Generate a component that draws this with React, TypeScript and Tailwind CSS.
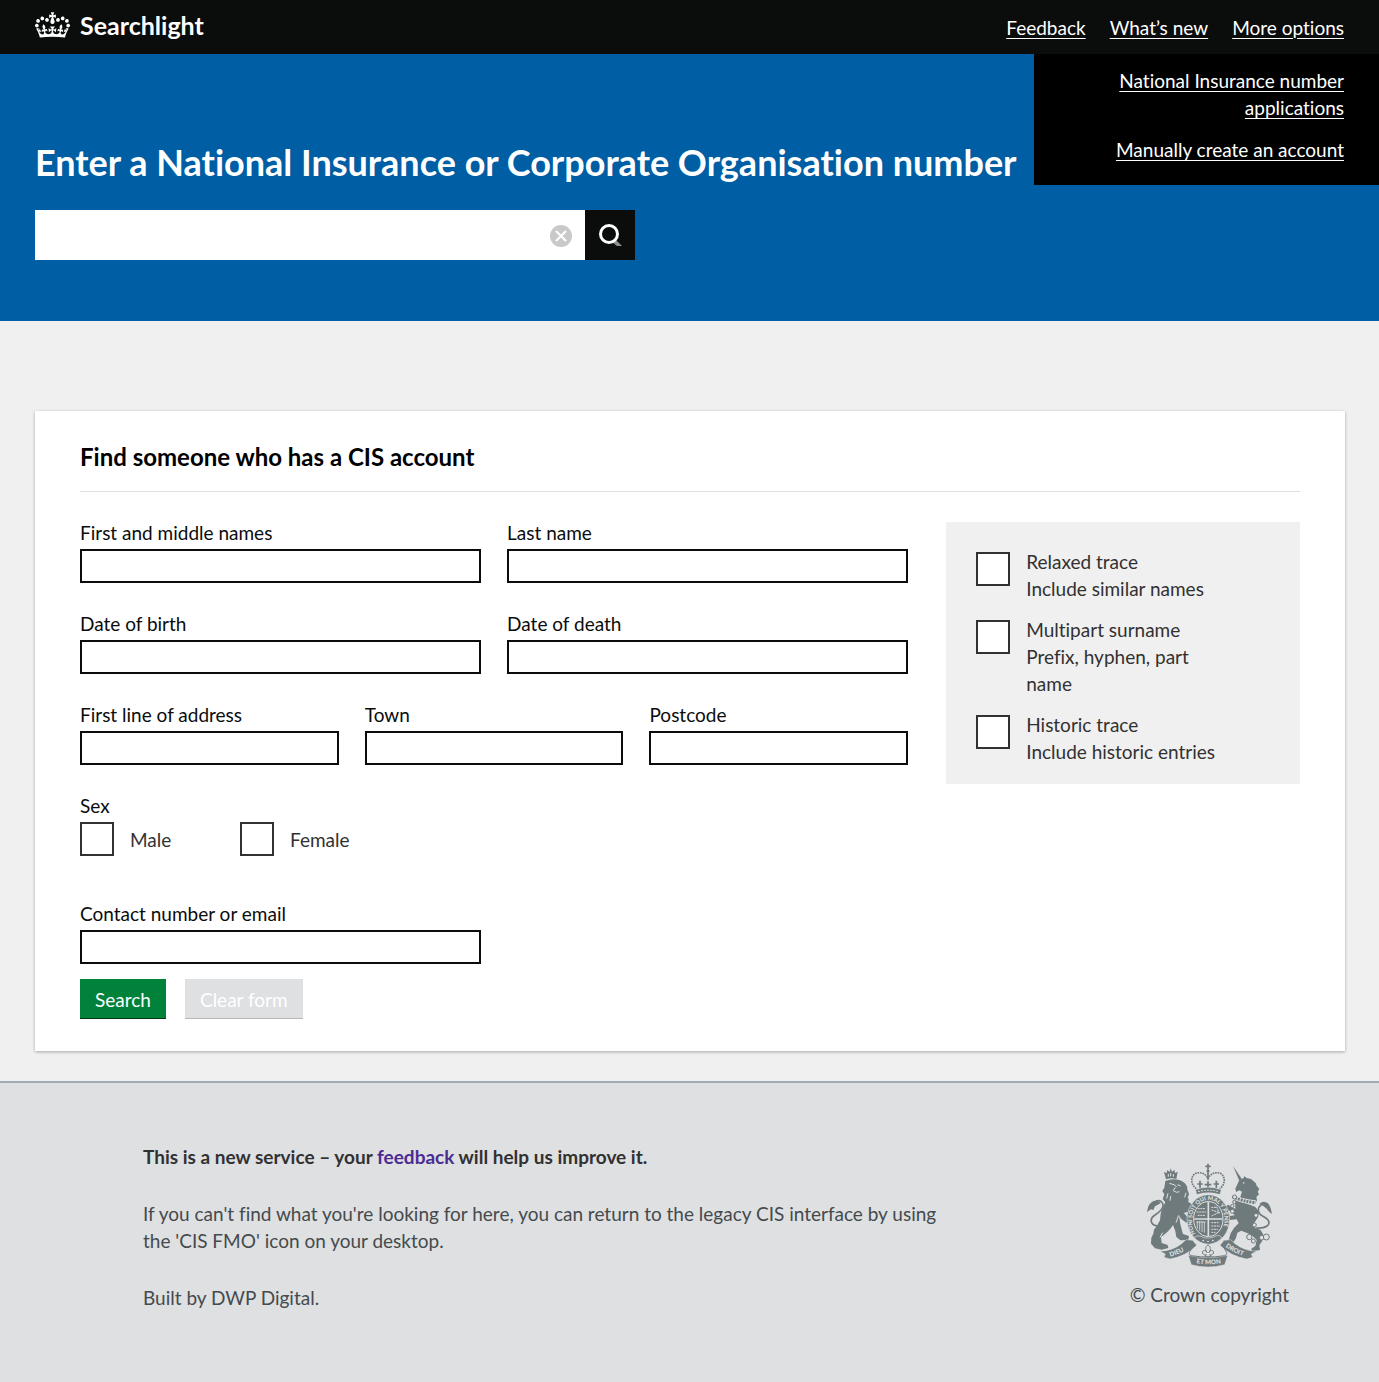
import { useState } from "react";

function Crown() {
  return (
    <svg viewBox="0 0 132 97" className="h-[26px] w-[35px]" fill="currentColor" aria-hidden="true">
      <path
        fillRule="evenodd"
        d="M25 30.2c3.5 1.5 7.7-.2 9.1-3.7 1.5-3.6-.2-7.8-3.9-9.2-3.6-1.4-7.6.3-9.1 3.9-1.4 3.5.3 7.5 3.9 9zM9 39.5c3.6 1.5 7.8-.2 9.2-3.7 1.5-3.6-.2-7.8-3.9-9.1-3.6-1.5-7.6.2-9.1 3.8-1.4 3.5.3 7.5 3.8 9zM4.4 57.2c3.5 1.5 7.7-.2 9.1-3.8 1.5-3.6-.2-7.7-3.9-9.1-3.5-1.5-7.6.3-9.1 3.8-1.4 3.5.3 7.6 3.9 9.1zm38.3-21.4c3.5 1.5 7.7-.2 9.1-3.8 1.5-3.6-.2-7.7-3.9-9.1-3.6-1.5-7.6.3-9.1 3.8-1.3 3.6.4 7.7 3.9 9.1zm64.4-5.6c-3.6 1.5-7.8-.2-9.1-3.7-1.5-3.6.2-7.8 3.8-9.2 3.6-1.4 7.7.3 9.2 3.9 1.3 3.5-.4 7.5-3.9 9zm15.9 9.3c-3.6 1.5-7.7-.2-9.1-3.7-1.5-3.6.2-7.8 3.7-9.1 3.6-1.5 7.7.2 9.2 3.8 1.5 3.5-.3 7.5-3.8 9zm4.7 17.7c-3.6 1.5-7.8-.2-9.2-3.8-1.5-3.6.2-7.7 3.9-9.1 3.6-1.5 7.7.3 9.2 3.8 1.3 3.5-.4 7.6-3.9 9.1zM89.3 35.8c-3.6 1.5-7.8-.2-9.2-3.8-1.4-3.6.2-7.7 3.9-9.1 3.6-1.5 7.7.3 9.2 3.8 1.4 3.6-.3 7.7-3.9 9.1zM69.7 17.7l8.9 4.7V9.3l-8.9 2.8c-.2-.3-.5-.6-.9-.9L72.4 0H59.6l3.5 11.2c-.3.3-.6.5-.9.9l-8.8-2.8v13.1l8.8-4.7c.3.3.6.7.9.9l-5 15.4v.1c-.2.8-.4 1.6-.4 2.4 0 4.1 3.1 7.5 7 8.1h.2c.3 0 .7.1 1 .1.4 0 .7 0 1-.1h.2c4-.6 7.1-4.1 7.1-8.1 0-.8-.1-1.7-.4-2.4V34l-5.1-15.4c.4-.2.7-.6 1-.9zM66 92.8c16.9 0 32.8 1.1 47.1 3.2 4-16.9 8.9-26.7 14-33.5l-9.6-3.4c1 4.9 1.1 7.2 0 10.2-1.5-1.4-3-4.3-4.2-8.7L108.6 76c2.8-2 5-3.2 7.5-3.3-4.4 9.4-10 11.9-13.6 11.2-4.3-.8-6.3-4.6-5.6-7.9 1-4.7 5.7-5.9 8-.5 4.3-8.7-3-11.4-7.6-8.8 7.1-7.2 7.9-13.5 2.1-21.1-8 6.1-8.1 12.3-4.5 20.8-4.7-5.4-12.1-2.5-9.5 6.2 3.4-5.2 7.9-2 7.2 3.1-.6 4.3-6.4 7.8-13.5 7.2-10.3-.9-10.9-8-11.2-13.8 2.5-.5 7.1 1.8 11 7.3L80.2 60c-4.1 4.4-8 5.3-12.3 5.4 1.4-4.4 8-11.6 8-11.6H55.5s6.4 7.2 7.9 11.6c-4.2-.1-8-1-12.3-5.4l1.4 16.4c3.9-5.5 8.5-7.7 10.9-7.3-.3 5.8-.9 12.8-11.1 13.8-7.2.6-12.9-2.9-13.5-7.2-.7-5 3.8-8.3 7.1-3.1 2.7-8.7-4.6-11.6-9.4-6.2 3.7-8.5 3.6-14.7-4.6-20.8-5.8 7.6-5 13.9 2.2 21.1-4.7-2.6-11.9.1-7.7 8.8 2.3-5.5 7.1-4.2 8.1.5.7 3.3-1.3 7.1-5.7 7.9-3.5.7-9-1.8-13.5-11.2 2.5.1 4.7 1.3 7.5 3.3l-4.7-15.4c-1.2 4.4-2.7 7.2-4.3 8.7-1.1-3-.9-5.3 0-10.2l-9.5 3.4c5 6.9 9.9 16.7 14 33.5 14.8-2.1 30.8-3.2 47.7-3.2z"
      />
    </svg>
  );
}

function RoyalArms() {
  const ink = "#6f7a7d";
  const paper = "#dee0e2";
  return (
    <svg viewBox="81 39 375 312" className="h-[104px] w-[125px]" role="img" aria-label="Royal coat of arms">
      {/* lion */}
      <g fill={ink}>
        <path d="M138 88l-6-22 8 3 2-9 7 6 3-11 4 11 7-7 2 10 8-4-4 22q-15-5-31 1z" />
        <path d="M136 93q20-8 42-3 18 6 24 22-2 6 2 12 6 10-1 18 6 6 2 14l10 6 4 8-14 16-14 2 12 14 10 4-2 8-12 4-16-12-6-10 4 26q4 18 8 30l18 6-2 12-24 1-12-10q-2-20-10-36-10 18-36 36l2 18 18 6 2 9-20 5-20-4-12-14 1-18 6-12 2-12 10-14 8-14 2-20 6-20 8-14-8-10 5-14-6-10 6-10z" />
      </g>
      <path d="M113 228c-22-2-24-20-12-30 12-8 26-16 28-30 1-12-10-20-20-14" fill="none" stroke={ink} strokeWidth="5" />
      <path d="M81 186q2-30 28-35l14 8-18 10-5 11-7-2z" fill={ink} />
      <g fill="none" stroke={paper} strokeWidth="3">
        <path d="M148 100l14 4 8 6M172 104l10 4M166 112l-6 10 10 5 8-2M144 130l-4 16M152 138l-2 14M198 128l-4 14" />
        <path d="M145 72v8M152 69v10M160 72v8" />
        <path d="M176 196l-8 22M120 262l8-14" />
      </g>

      {/* unicorn */}
      <path d="M339 48l27 40-8 4z" fill={ink} />
      <g fill={ink}>
        <path d="M346 116l12-26 12-5 4-7 5 6 14 3 14 12 3 8 8 10-5 8 4 8-8 8 2 10-6 10-45-18 6-18-8-4-10 5z" />
        <path d="M345 148l60 22 12 14-3 18-12 18 4 14 16 6 8 14-4 20-8 12 2 14-24 4-2-8 12-8 4-18-16-16-30-12-12 6-4 16-10 16-24 8-4-8 16-10 6-20 10-16 14-14-6-12-20 2-12-10-2-12 8 2 6 8 14-2-10-12-14-4-2-12 8-4 8 8 12 4z" />
      </g>
      <path d="M337 140q30 14 70 18" fill="none" stroke={paper} strokeWidth="14" />
      <path d="M337 140q30 14 70 18" fill="none" stroke={ink} strokeWidth="9" strokeDasharray="6 3" />
      <circle cx="371" cy="99" r="2.500" fill={paper} />
      <g fill={paper} stroke={ink} strokeWidth="3">
        <circle cx="344" cy="141" r="6" />
        <circle cx="343" cy="156" r="5" />
        <circle cx="337" cy="168" r="5" />
        <circle cx="337" cy="184" r="6" />
        <circle cx="408" cy="196" r="6" />
        <circle cx="403" cy="225" r="6" />
        <circle cx="388" cy="261" r="8" />
        <circle cx="400" cy="273" r="6" />
        <circle cx="425" cy="263" r="7" />
        <circle cx="439" cy="261" r="9" />
      </g>
      <path d="M408 234c30 2 46-10 36-24-10-12-28-12-29-28 0-16 14-24 24-18 6 4 8 8 10 16" fill="none" stroke={ink} strokeWidth="5" />
      <path d="M418 162q12-12 26-2 8 8 12 32l-8-6-8-10-10-8z" fill={ink} />

      {/* central crown */}
      <g fill="none" stroke={ink}>
        <path d="M228 120q36-14 74 0l-3 12q-34-10-68 0z" fill={ink} />
        <path d="M229 116c-18-12-18-38-2-46 14-5 30 0 37 16 7-16 23-21 37-16 16 8 16 34-2 46" strokeDasharray="5 2.500" strokeWidth="5" />
        <path d="M264 41v18M256 49h16M264 66v22" strokeWidth="5" />
        <circle cx="264" cy="63" r="4" fill={ink} />
        <path d="M240 92v22M232 102h16M289 92v22M281 102h16M264 94v18M254 104h20" strokeWidth="5" />
      </g>
      <path d="M234 125q30-9 62 0" fill="none" stroke={paper} strokeWidth="3" strokeDasharray="6 3" />

      {/* garter and quartered shield */}
      <ellipse cx="265" cy="208" rx="64" ry="74" fill={ink} stroke={paper} strokeWidth="2" />
      <ellipse cx="265" cy="207" rx="44" ry="53" fill={ink} stroke={paper} strokeWidth="3" />
      <g fill="none" stroke={paper}>
        <path d="M223 207h84M265 156v102" strokeWidth="5" />
        <path
          d="M233 176h24M230 186h28M233 196h24M274 172h16M275 180l24 8M275 198l24-12M290 170l8 22M274 218h24M274 228h26M274 238h20M274 247h12"
          strokeWidth="3"
          strokeDasharray="6 2"
        />
        <path d="M232 214v22M239 214v28M246 214v32M253 216v32M229 216h28" strokeWidth="2.500" />
      </g>
      <defs>
        <path id="garter" d="M226 252A50 60 0 0 1 217 207a48 57 0 0 1 96 0a50 60 0 0 1-14 45" />
        <path id="ribbon-left" d="M151 320Q188 310 216 287" />
        <path id="ribbon-middle" d="M229 339Q264 347 309 339" />
        <path id="ribbon-right" d="M316 290Q342 311 382 321" />
      </defs>
      <text fill={paper} fontFamily="Lato, sans-serif" fontWeight="900" fontSize="17">
        <textPath href="#garter">HONI SOIT QUI MAL Y PENSE</textPath>
      </text>
      <path d="M222 262q10-6 18-4 26 14 54-3l12 8q-12 16-40 20-28-2-44-21z" fill={ink} stroke={paper} strokeWidth="2" />
      <path d="M248 270l3 3M264 273v3M280 270l-3 3" stroke={paper} strokeWidth="5" />

      {/* motto ribbon */}
      <g fill={ink} stroke={paper} strokeWidth="1.500">
        <path d="M120 304l18-2q34-6 60-33l20 2 12 15q-30 32-80 41l-18-5 4-10z" />
        <path d="M410 304l-18-2q-34-6-60-33l-20 2-12 15q30 32 80 41l18-5-4-10z" />
        <path d="M205 316q60 14 118 0l-9 28q-50 14-100 0z" />
      </g>
      <path
        d="M208 288c10 0 8 8 2 16-6 10 0 12 12 14 24 4 60 4 84 0 12-2 18-4 12-14-6-8-8-16 4-16"
        fill="none"
        stroke={ink}
        strokeWidth="3"
      />
      <path
        d="M264 284c10 8 8 16 3 24 4-12 18-6 12 4-2 3-6 3-10 2l5 5h-8l-2 5-2-5h-8l5-5c-4 1-8 1-10-2-6-10 8-16 12-4-5-8-7-16 3-24z"
        fill={paper}
        stroke={ink}
        strokeWidth="3"
      />
      <g fill={paper} fontFamily="Lato, sans-serif" fontWeight="900" fontSize="19">
        <text>
          <textPath href="#ribbon-left">DIEU</textPath>
        </text>
        <text>
          <textPath href="#ribbon-middle">ET MON</textPath>
        </text>
        <text>
          <textPath href="#ribbon-right">DROIT</textPath>
        </text>
      </g>
    </svg>
  );
}

function Field({ id, label }: { id: string; label: string }) {
  return (
    <div className="min-w-0">
      <label htmlFor={id} className="mb-[5px] block leading-[22px]">
        {label}
      </label>
      <input id={id} name={id} type="text" className="block h-[34px] w-full rounded-none border-2 border-[#0b0c0c] bg-white px-1" />
    </div>
  );
}

const boxClass =
  "size-[34px] shrink-0 appearance-none rounded-none border-2 border-[#323132] bg-white checked:bg-[#323132]";

function TraceOption({ id, title, hint }: { id: string; title: string; hint: string }) {
  return (
    <div className="flex items-start gap-4">
      <input id={id} type="checkbox" className={`mt-1 ${boxClass}`} />
      <label htmlFor={id} className="max-w-[196px] leading-[27px]">
        <span className="block">{title}</span>
        <span className="block">{hint}</span>
      </label>
    </div>
  );
}

function SexOption({ id, label }: { id: string; label: string }) {
  return (
    <div className="flex w-40 items-center gap-4">
      <input id={id} type="checkbox" className={boxClass} />
      <label htmlFor={id} className="text-[#323132]">
        {label}
      </label>
    </div>
  );
}

const navLink = "underline decoration-1 underline-offset-3";

export default function App() {
  const [query, setQuery] = useState("");
  return (
    <div className="flex min-h-screen flex-col bg-[#f0f0f0] font-['Lato',sans-serif] text-[19px] leading-[27px] text-[#0b0c0c] [font-variant-ligatures:none]">
      <header className="relative flex h-[54px] items-center justify-between bg-[#0b0c0c] px-[35px] text-white">
        <a href="#home" className="flex items-center gap-2.5 pb-1 text-[25px] font-bold">
          <Crown />
          <span>Searchlight</span>
        </a>
        <nav className="flex gap-6">
          <a href="#feedback" className={navLink}>Feedback</a>
          <a href="#new" className={navLink}>What’s new</a>
          <a href="#options" className={navLink}>More options</a>
        </nav>
        <ul className="absolute top-full right-0 flex w-[345px] flex-col gap-[15px] bg-black pt-[13px] pr-[35px] pb-[22px] pl-[75px] text-right">
          <li>
            <a href="#applications" className={navLink}>National Insurance number applications</a>
          </li>
          <li>
            <a href="#create" className={navLink}>Manually create an account</a>
          </li>
        </ul>
      </header>

      <section className="bg-[#005ea5] px-[35px] pt-[86px] pb-[61px]">
        <h1 className="mb-[25px] text-[36px] leading-[45px] font-bold text-white">
          <label htmlFor="number">Enter a National Insurance or Corporate Organisation number</label>
        </h1>
        <form className="flex h-[50px] max-w-[600px]" onSubmit={(e) => e.preventDefault()}>
          <div className="flex flex-1 items-center bg-white pr-3">
            <input
              id="number"
              value={query}
              onChange={(e) => setQuery(e.target.value)}
              className="h-full min-w-0 flex-1 px-3 outline-none"
            />
            <button type="button" aria-label="Clear" onClick={() => setQuery("")}>
              <svg viewBox="0 0 24 24" className="size-6" aria-hidden="true">
                <circle cx="12" cy="13" r="11" fill="#c9c9c9" />
                <path d="M7 8l10 10m0-10l-10 10" stroke="#fff" strokeWidth="2.200" />
              </svg>
            </button>
          </div>
          <button type="submit" aria-label="Search number" className="flex w-[50px] items-center justify-center bg-[#0b0c0c]">
            <svg viewBox="0 0 24 24" className="size-6" fill="none" aria-hidden="true">
              <path d="M14 19l5 4h5l-6-6z" fill="#8f9091" />
              <circle cx="11" cy="11" r="8.500" stroke="#fff" strokeWidth="3" />
            </svg>
          </button>
        </form>
      </section>

      <main className="pt-[90px] pr-[34px] pb-[30px] pl-[35px]">
        <div className="bg-white px-[45px] pt-[30px] pb-8 shadow-[0_1px_3px_rgba(0,0,0,0.3)]">
          <h2 className="border-b border-[#e0e0e0] pb-[18px] text-[24px] leading-8 font-bold text-black">
            Find someone who has a CIS account
          </h2>
          <form className="mt-[30px] flex items-start gap-[38px]" onSubmit={(e) => e.preventDefault()}>
            <div className="min-w-0 flex-1">
              <div className="flex flex-col gap-[30px]">
                <div className="grid grid-cols-2 gap-x-[26px] gap-y-[30px]">
                  <Field id="first-names" label="First and middle names" />
                  <Field id="last-name" label="Last name" />
                  <Field id="birth" label="Date of birth" />
                  <Field id="death" label="Date of death" />
                </div>
                <div className="grid grid-cols-3 gap-x-[26px]">
                  <Field id="address" label="First line of address" />
                  <Field id="town" label="Town" />
                  <Field id="postcode" label="Postcode" />
                </div>
                <fieldset>
                  <legend className="mb-[5px] leading-[22px]">Sex</legend>
                  <div className="flex">
                    <SexOption id="male" label="Male" />
                    <SexOption id="female" label="Female" />
                  </div>
                </fieldset>
              </div>
              <div className="mt-[47px] grid grid-cols-2 gap-x-[26px]">
                <Field id="contact" label="Contact number or email" />
              </div>
              <div className="mt-[15px] flex gap-[19px]">
                <button type="submit" className="h-10 bg-[#00823b] px-[15px] text-white shadow-[inset_0_-1px_0_#003618]">
                  Search
                </button>
                <button type="reset" className="h-10 bg-[#dee0e2] px-[15px] text-white shadow-[inset_0_-1px_0_#b5b7b9]">
                  Clear form
                </button>
              </div>
            </div>
            <div className="flex w-[29%] flex-col gap-3.5 bg-[#f0f0f0] px-[30px] pt-[26px] pb-[19px] text-[#323132]">
              <TraceOption id="relaxed" title="Relaxed trace" hint="Include similar names" />
              <TraceOption id="multipart" title="Multipart surname" hint="Prefix, hyphen, part name" />
              <TraceOption id="historic" title="Historic trace" hint="Include historic entries" />
            </div>
          </form>
        </div>
      </main>

      <footer className="flex flex-1 items-start justify-between border-t-2 border-[#a1acb2] bg-[#dee0e2] pt-[60px] pr-[90px] pb-[70px] pl-[143px] text-[#454a4d]">
        <div className="flex max-w-[800px] flex-col gap-[30px]">
          <p className="font-bold text-[#323132]">
            This is a new service – your{" "}
            <a href="#feedback" className="text-[#4c2c92]">feedback</a> will help us improve it.
          </p>
          <p>
            If you can't find what you're looking for here, you can return to the legacy CIS interface by using the
            'CIS FMO' icon on your desktop.
          </p>
          <p>Built by DWP Digital.</p>
        </div>
        <a href="#copyright" className="mt-5 flex flex-col items-center gap-3.5">
          <RoyalArms />
          <span>© Crown copyright</span>
        </a>
      </footer>
    </div>
  );
}
